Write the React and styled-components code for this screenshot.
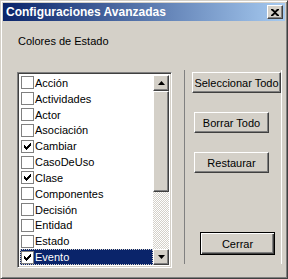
import React from "react";
import styled, { createGlobalStyle, css } from "styled-components";

const Global = createGlobalStyle`
  html, body { margin: 0; padding: 0; background: #d4d0c8; }
  body { font-family: Tahoma, "DejaVu Sans", sans-serif; font-size: 11px; }
`;

const FONT = `"Liberation Sans", Arial, sans-serif`;

const Window = styled.div`
  box-sizing: border-box;
  width: 288px;
  height: 279px;
  background: #d4d0c8;
  border: 1px solid;
  border-color: #d4d0c8 #404040 #404040 #d4d0c8;
  box-shadow: inset 1px 1px #ffffff, inset -1px -1px #808080;
  padding: 2px;
  display: flex;
  flex-direction: column;
  font-family: ${FONT};
  font-size: 11px;
  color: #000;
`;

const TitleBar = styled.div`
  height: 18px;
  display: flex;
  align-items: center;
  justify-content: space-between;
  padding: 0 2px 0 3px;
  background: linear-gradient(to right, #0a246a, #a6caf0);
`;

const Title = styled.span`
  color: #fff;
  font-weight: bold;
  font-size: 12px;
  font-family: ${FONT};
`;

const raised = css`
  background: #d4d0c8;
  border: 1px solid;
  border-color: #ffffff #404040 #404040 #ffffff;
  box-shadow: inset -1px -1px #808080;
  box-sizing: border-box;
`;

const CloseBtn = styled.div`
  ${raised};
  width: 16px;
  height: 14px;
  display: flex;
  align-items: center;
  justify-content: center;
`;

const Body = styled.div`
  flex: 1;
  display: flex;
  padding: 0 0 0 14px;
`;

const LeftCol = styled.div`
  display: flex;
  flex-direction: column;
`;

const Label = styled.div`
  margin-top: 14px;
  margin-left: 1px;
  height: 13px;
  line-height: 13px;
`;

const ListBox = styled.div`
  margin-top: 24px;
  width: 155px;
  height: 196px;
  box-sizing: border-box;
  border: 1px solid;
  border-color: #808080 #ffffff #ffffff #808080;
  box-shadow: inset 1px 1px #404040, inset -1px -1px #d4d0c8;
  padding: 2px;
  display: flex;
  background: #fff;
`;

const Items = styled.div`
  flex: 1;
  display: flex;
  flex-direction: column;
`;

const Item = styled.div`
  height: 16px;
  box-sizing: border-box;
  display: flex;
  align-items: center;
  gap: 1px;
  padding-left: 1px;
  ${(p) =>
    p.$selected &&
    css`
      background: #0a246a;
      color: #fff;
      outline: 1px dotted #d4d0c8;
      outline-offset: -1px;
    `}
`;

const Box = styled.span`
  width: 13px;
  height: 13px;
  box-sizing: border-box;
  border: 1px solid #808080;
  background: #fff;
  display: inline-flex;
  align-items: center;
  justify-content: center;
`;

const ItemText = styled.span`
  line-height: 14px;
`;

const ScrollBar = styled.div`
  width: 16px;
  display: flex;
  flex-direction: column;
`;

const ArrowBtn = styled.div`
  ${raised};
  width: 16px;
  height: 16px;
  display: flex;
  align-items: center;
  justify-content: center;
`;

const Track = styled.div`
  flex: 1;
  display: flex;
  flex-direction: column;
  background-color: #ffffff;
  background-image: conic-gradient(#d4d0c8 25%, #ffffff 0 50%, #d4d0c8 0 75%, #ffffff 0);
  background-size: 2px 2px;
`;

const Thumb = styled.div`
  ${raised};
  width: 16px;
  height: ${(p) => p.$h}px;
`;

const RightCol = styled.div`
  margin-left: 12px;
  margin-top: 49px;
  margin-bottom: 12px;
  border-left: 1px solid #808080;
  box-shadow: 1px 0 #ffffff;
  padding-left: 7px;
  display: flex;
  flex-direction: column;
  align-items: flex-start;
`;

const Button = styled.div`
  ${raised};
  width: ${(p) => p.$w}px;
  height: ${(p) => p.$h || 21}px;
  margin-top: ${(p) => p.$mt}px;
  margin-left: ${(p) => p.$ml || 0}px;
  display: flex;
  align-items: center;
  justify-content: center;
  ${(p) =>
    p.$default &&
    css`
      border: 1px solid #000;
      box-shadow: inset 1px 1px #ffffff, inset -1px -1px #404040, inset -2px -2px #808080;
    `}
`;

const Check = ({ color = "#000" }) => (
  <svg width="7" height="7" viewBox="0 0 7 7">
    <path d="M0 2h1v1h1v1h1v-1h1v-1h1v-1h1v-1h1v3h-1v1h-1v1h-1v1h-1v1h-1v-1h-1v-1h-1v-1h-1z" fill={color} />
  </svg>
);

const Tri = ({ down }) => (
  <svg width="7" height="4" viewBox="0 0 7 4">
    {down ? <path d="M0 0h7L3.5 4z" fill="#000" /> : <path d="M0 4h7L3.5 0z" fill="#000" />}
  </svg>
);

const items = [
  ["Acción", false],
  ["Actividades", false],
  ["Actor", false],
  ["Asociación", false],
  ["Cambiar", true],
  ["CasoDeUso", false],
  ["Clase", true],
  ["Componentes", false],
  ["Decisión", false],
  ["Entidad", false],
  ["Estado", false],
  ["Evento", true],
];

export default function App() {
  return (
    <>
      <Global />
      <Window>
        <TitleBar>
          <Title>Configuraciones Avanzadas</Title>
          <CloseBtn>
            <svg width="8" height="7" viewBox="0 0 8 7">
              <path d="M0 0h2l2 2 2-2h2v1L5 3.5 8 6v1H6L4 5 2 7H0V6l3-2.5L0 1z" fill="#000" />
            </svg>
          </CloseBtn>
        </TitleBar>
        <Body>
          <LeftCol>
            <Label>Colores de Estado</Label>
            <ListBox>
              <Items>
                {items.map(([t, c], i) => (
                  <Item key={t} $selected={i === items.length - 1}>
                    <Box>{c && <Check />}</Box>
                    <ItemText>{t}</ItemText>
                  </Item>
                ))}
              </Items>
              <ScrollBar>
                <ArrowBtn><Tri /></ArrowBtn>
                <Track>
                  <Thumb $h={101} />
                </Track>
                <ArrowBtn><Tri down /></ArrowBtn>
              </ScrollBar>
            </ListBox>
          </LeftCol>
          <RightCol>
            <Button $w={89} $mt={2}>Seleccionar Todo</Button>
            <Button $w={75} $mt={19} $ml={2}>Borrar Todo</Button>
            <Button $w={75} $mt={19} $ml={2}>Restaurar</Button>
            <Button $w={75} $h={23} $mt={59} $ml={8} $default>Cerrar</Button>
          </RightCol>
        </Body>
      </Window>
    </>
  );
}
